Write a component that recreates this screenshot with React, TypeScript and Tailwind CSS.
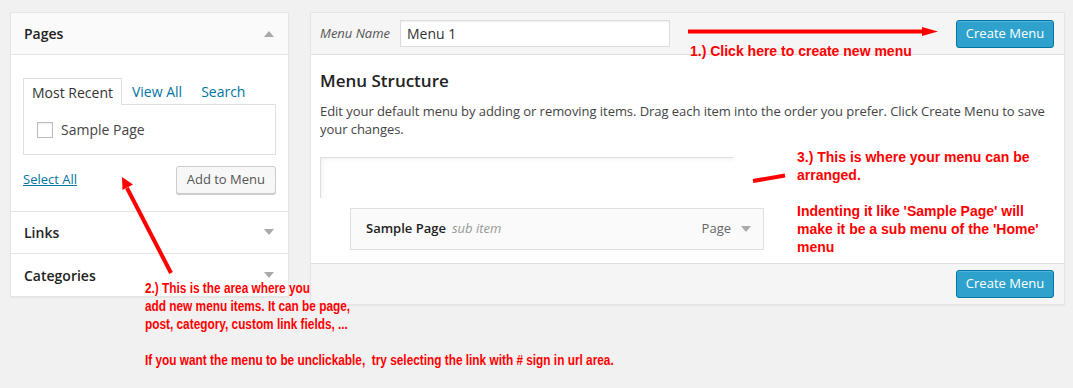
import React from "react";

const Tri = ({ up = false, className = "" }: { up?: boolean; className?: string }) => (
  <svg width="10" height="7" viewBox="0 0 10 7" className={className}>
    {up ? <polygon points="0,7 5,1 10,7" fill="#aaa" /> : <polygon points="0,0 10,0 5,6" fill="#aaa" />}
  </svg>
);

export default function App() {
  const sans = { fontFamily: '"Open Sans", "Noto Sans", sans-serif' };
  const red = { fontFamily: '"Liberation Sans", Arial, sans-serif' };
  return (
    <div className="relative w-[1073px] h-[388px] bg-[#f1f1f1] overflow-hidden text-[#444]" style={sans}>
      <div className="flex items-start gap-[21px] pl-[10px] pt-[12px]">
        {/* Left panel */}
        <div className="w-[279px] border border-[#e5e5e5] bg-white shadow-[0_1px_1px_rgba(0,0,0,0.04)]">
          <div className="h-[42px] bg-[#fafafa] border-b border-[#e5e5e5] flex items-center justify-between pl-[13px] pr-[14px]">
            <span className="text-[14px] font-semibold text-[#222]">Pages</span>
            <Tri up />
          </div>
          <div className="h-[156px] pt-[23px] px-[12px]">
            <div className="flex items-end h-[26px] text-[14px]">
              <div className="h-[27px] px-[8px] flex items-center border-t border-l border-r border-[#dfdfdf] bg-white -mb-px relative z-10 text-[#333]">
                Most Recent
              </div>
              <span className="ml-[10px] h-[26px] flex items-center text-[#0074a2]">View All</span>
              <span className="ml-[19px] h-[26px] flex items-center text-[#0074a2]">Search</span>
            </div>
            <div className="h-[51px] border border-[#dfdfdf] flex items-center pl-[13px]">
              <span className="w-[16px] h-[16px] border border-[#bbb] bg-white inline-block shadow-[inset_0_1px_2px_rgba(0,0,0,0.07)]" />
              <span className="ml-[8px] text-[14px] text-[#444]">Sample Page</span>
            </div>
            <div className="flex items-center justify-between mt-[11px]">
              <span className="text-[13px] text-[#0074a2] underline">Select All</span>
              <span className="h-[28px] px-[10px] flex items-center border border-[#ccc] rounded-[3px] bg-[#f7f7f7] text-[13px] text-[#555] shadow-[0_1px_0_#ccc]">
                Add to Menu
              </span>
            </div>
          </div>
          <div className="h-[42px] border-t border-[#e5e5e5] flex items-center justify-between pl-[13px] pr-[14px]">
            <span className="text-[14px] font-semibold text-[#222]">Links</span>
            <Tri />
          </div>
          <div className="h-[43px] border-t border-[#e5e5e5] flex items-center justify-between pl-[13px] pr-[14px]">
            <span className="text-[14px] font-semibold text-[#222]">Categories</span>
            <Tri />
          </div>
        </div>

        {/* Right panel */}
        <div className="w-[755px] border border-[#e5e5e5] bg-white shadow-[0_1px_1px_rgba(0,0,0,0.04)]">
          <div className="h-[42px] bg-[#f5f5f5] border-b border-[#dfdfdf] flex items-center pl-[9px] pr-[10px]">
            <span className="text-[13px] italic text-[#555]">Menu Name</span>
            <span className="ml-[10px] w-[270px] h-[27px] border border-[#ddd] bg-white flex items-center px-[6px] text-[14px] text-[#333] shadow-[inset_0_1px_2px_rgba(0,0,0,0.07)]">
              Menu 1
            </span>
            <span className="ml-auto h-[28px] w-[98px] flex items-center justify-center rounded-[3px] bg-[#2ea2cc] border border-[#0074a2] text-white text-[13px] shadow-[inset_0_1px_0_rgba(120,200,230,0.5)]">
              Create Menu
            </span>
          </div>
          <div className="h-[208px] px-[9px] pt-[14px]">
            <div className="text-[17px] leading-[24px] font-semibold text-[#222]">Menu Structure</div>
            <p className="mt-[9px] text-[13px] leading-[18px] text-[#444] whitespace-nowrap tracking-[-0.05px]">
              Edit your default menu by adding or removing items. Drag each item into the order you prefer. Click Create Menu to save
              <br />
              your changes.
            </p>
            <div className="mt-[19px] w-[413px] h-[41px] border-t border-l border-[#dfdfdf] shadow-[inset_3px_3px_6px_-3px_rgba(0,0,0,0.08)]" />
            <div className="mt-[10px] ml-[30px] w-[414px] h-[42px] border border-[#dfdfdf] bg-[#fafafa] flex items-center pl-[15px] pr-[12px]">
              <span className="text-[13px] font-semibold text-[#222]">Sample Page</span>
              <span className="ml-[6px] text-[13px] italic text-[#999]">sub item</span>
              <span className="ml-auto text-[13px] text-[#666]">Page</span>
              <Tri className="ml-[10px]" />
            </div>
          </div>
          <div className="h-[41px] bg-[#f5f5f5] border-t border-[#dfdfdf] flex items-center justify-end pr-[10px]">
            <span className="h-[28px] w-[98px] flex items-center justify-center rounded-[3px] bg-[#2ea2cc] border border-[#0074a2] text-white text-[13px] shadow-[inset_0_1px_0_rgba(120,200,230,0.5)]">
              Create Menu
            </span>
          </div>
        </div>
      </div>

      {/* Annotations */}
      <svg className="absolute left-0 top-0 pointer-events-none" width="1073" height="388">
        <line x1="688" y1="31.5" x2="925" y2="31.5" stroke="#ff0000" strokeWidth="4" />
        <polygon points="922,27 938,31.5 922,36" fill="#ff0000" />
        <line x1="753" y1="181" x2="785" y2="175.5" stroke="#ff0000" strokeWidth="4" />
        <line x1="171" y1="273" x2="127" y2="188" stroke="#ff0000" strokeWidth="4" />
        <polygon points="122,177 133,184.5 122.5,190" fill="#ff0000" />
      </svg>
      <div className="absolute left-[690px] top-[42px] text-[14px] leading-[18px] font-bold text-[#ff0000] whitespace-nowrap" style={red}>
        1.) Click here to create new menu
      </div>
      <div className="absolute left-[797px] top-[148px] text-[14px] leading-[18px] font-bold text-[#ff0000] whitespace-nowrap" style={red}>
        <div>3.) This is where your menu can be</div>
        <div>arranged.</div>
        <div>&nbsp;</div>
        <div>Indenting it like 'Sample Page' will</div>
        <div>make it be a sub menu of the 'Home'</div>
        <div>menu</div>
      </div>
      <div className="absolute left-[145px] top-[279px] text-[14px] leading-[18px] font-bold text-[#ff0000] whitespace-nowrap origin-left scale-x-[0.845]" style={red}>
        <div>2.) This is the area where you</div>
        <div>add new menu items. It can be page,</div>
        <div>post, category, custom link fields, ...</div>
        <div>&nbsp;</div>
        <div>If you want the menu to be unclickable,&nbsp; try selecting the link with # sign in url area.</div>
      </div>
    </div>
  );
}
